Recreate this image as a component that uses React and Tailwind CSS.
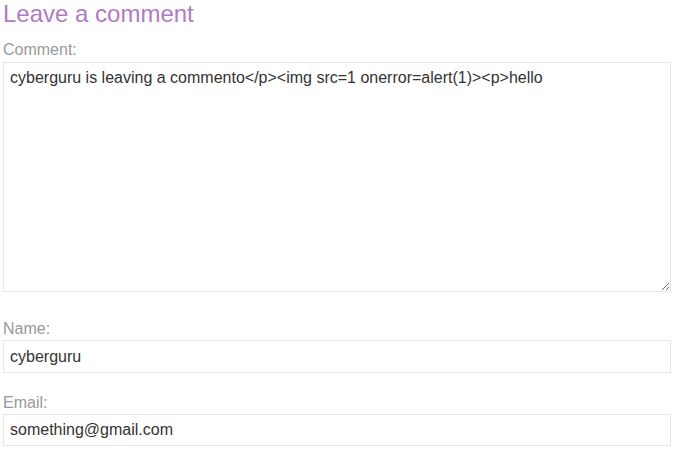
import { useState } from 'react';

export default function App() {
  const [comment, setComment] = useState('cyberguru is leaving a commento</p><img src=1 onerror=alert(1)><p>hello');
  const [name, setName] = useState('cyberguru');
  const [email, setEmail] = useState('something@gmail.com');

  return (
    <div className="min-h-screen bg-white font-['Liberation_Sans',Arial,sans-serif] pl-[3px]">
      <h1 className="text-[24px] leading-[27px] font-normal text-[#b07bc4]">Leave a comment</h1>

      <form className="flex flex-col w-[668px]">
        <label className="mt-[13px] text-[16px] leading-[20px] text-[#999]">Comment:</label>
        <textarea
          value={comment}
          onChange={e => setComment(e.target.value)}
          className="mt-[2px] h-[230px] w-full border border-[#e6e6e6] px-[6px] pt-[5px] text-[16px] leading-[20px] text-[#333] outline-none"
        />

        <label className="mt-[27px] text-[16px] leading-[20px] text-[#999]">Name:</label>
        <input
          value={name}
          onChange={e => setName(e.target.value)}
          className="mt-[1px] h-[33px] w-full border border-[#e6e6e6] px-[6px] text-[16px] text-[#333] outline-none"
        />

        <label className="mt-[20px] text-[16px] leading-[20px] text-[#999]">Email:</label>
        <input
          value={email}
          onChange={e => setEmail(e.target.value)}
          className="mt-[1px] h-[32px] w-full border border-[#e6e6e6] px-[6px] text-[16px] text-[#333] outline-none"
        />
      </form>
    </div>
  );
}
